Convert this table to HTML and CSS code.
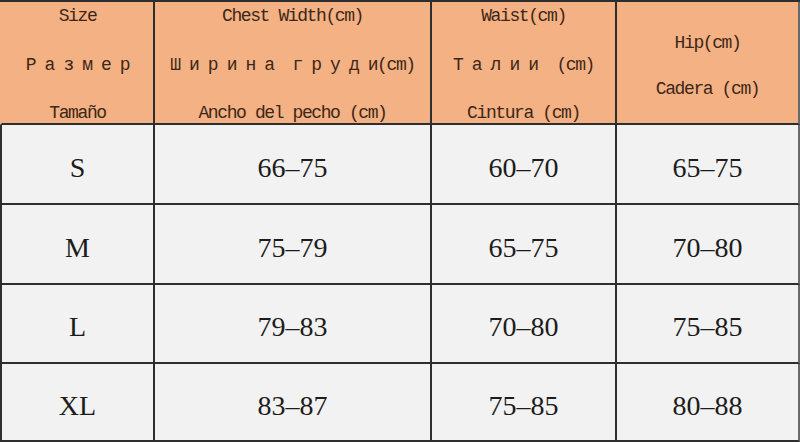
FILE: index.html
```html
<!DOCTYPE html>
<html lang="en">
<head>
<meta charset="utf-8">
<title>Size chart</title>
<link rel="stylesheet" href="styles.css">
</head>
<body>
<div class="chart">
  <div class="cell head three">
    <span class="ln">Size</span>
    <span class="ln">Р а з м е р</span>
    <span class="ln">Tamaño</span>
  </div>
  <div class="cell head three">
    <span class="ln">Chest Width(cm)</span>
    <span class="ln">Ш и р и н а  г р у д и(cm)</span>
    <span class="ln">Ancho del pecho (cm)</span>
  </div>
  <div class="cell head three">
    <span class="ln">Waist(cm)</span>
    <span class="ln">Т а л и и  (cm)</span>
    <span class="ln">Cintura (cm)</span>
  </div>
  <div class="cell head two">
    <span class="ln">Hip(cm)</span>
    <span class="ln">Cadera (cm)</span>
  </div>

  <div class="cell body r1">S</div>
  <div class="cell body r1">66–75</div>
  <div class="cell body r1">60–70</div>
  <div class="cell body r1">65–75</div>

  <div class="cell body r2">M</div>
  <div class="cell body r2">75–79</div>
  <div class="cell body r2">65–75</div>
  <div class="cell body r2">70–80</div>

  <div class="cell body r3">L</div>
  <div class="cell body r3">79–83</div>
  <div class="cell body r3">70–80</div>
  <div class="cell body r3">75–85</div>

  <div class="cell body r4">XL</div>
  <div class="cell body r4">83–87</div>
  <div class="cell body r4">75–85</div>
  <div class="cell body r4">80–88</div>
</div>
</body>
</html>
```

FILE: styles.css
```css
* {
  box-sizing: border-box;
}

html, body {
  margin: 0;
  padding: 0;
  background: #f2f2f2;
}

.chart {
  width: 800px;
  height: 442px;
  display: grid;
  grid-template-columns: 155px 277px 185px 183px;
  grid-template-rows: 123px 80px 80px 79px 78px;
  border-top: 2px solid #2e2e2e;
  overflow: hidden;
}

.cell {
  border-right: 2px solid #2e2e2e;
  border-bottom: 2px solid #2e2e2e;
  display: flex;
  align-items: center;
}

.cell:nth-child(4n+1) {
  border-left: 2px solid #2e2e2e;
}

.cell:nth-child(4n) {
  border-right-color: #6a6a6a;
}

.head {
  background: #f4b183;
  color: #3c2718;
  font-family: "Liberation Mono", "DejaVu Sans Mono", monospace;
  font-size: 18px;
  letter-spacing: -1.4px;
  flex-direction: column;
  white-space: pre;
}

.head:first-child {
  border-left-color: #f4b183;
}

.ln {
  display: block;
  line-height: 20px;
  height: 20px;
  text-align: center;
}

.three {
  justify-content: space-between;
  padding: 4px 0 0 0;
}

.two {
  justify-content: center;
  gap: 26px;
  padding-top: 6px;
}

.body {
  background: #f2f2f2;
  color: #1c1c1c;
  font-family: "Liberation Serif", "Times New Roman", serif;
  font-size: 28px;
  justify-content: center;
  padding-top: 7px;
}
```
